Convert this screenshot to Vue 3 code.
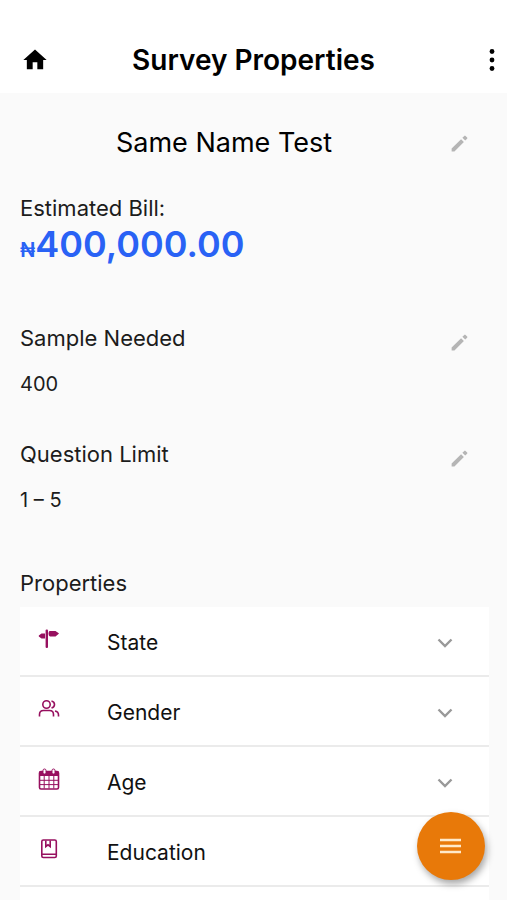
<template>
  <div class="page">
    <header class="app-bar">
      <a href="#" class="icon-btn" aria-label="Home">
        <svg class="icon-home" viewBox="0 0 24 24" fill="currentColor">
          <path d="M10 20v-6h4v6h5v-8h3L12 3 2 12h3v8z" />
        </svg>
      </a>
      <h1 class="title">Survey Properties</h1>
      <button type="button" class="icon-btn more" aria-label="More options">
        <svg class="icon-more" viewBox="0 0 8 24" fill="currentColor">
          <circle cx="4" cy="3.500" r="2.400" />
          <circle cx="4" cy="12" r="2.400" />
          <circle cx="4" cy="20.500" r="2.400" />
        </svg>
      </button>
    </header>

    <main class="content">
      <section class="name-row">
        <h2 class="name">Same Name Test</h2>
        <button type="button" class="icon-btn edit" aria-label="Edit name">
          <svg class="icon-edit" viewBox="0 0 24 24" fill="currentColor"><path :d="pencil" /></svg>
        </button>
      </section>

      <section class="bill">
        <h3 class="label">Estimated Bill:</h3>
        <p class="amount"><span class="currency">₦</span>400,000.00</p>
      </section>

      <section v-for="field in fields" :key="field.label" class="field">
        <div>
          <h3 class="label">{{ field.label }}</h3>
          <p class="value">{{ field.value }}</p>
        </div>
        <button type="button" class="icon-btn edit" :aria-label="'Edit ' + field.label">
          <svg class="icon-edit" viewBox="0 0 24 24" fill="currentColor"><path :d="pencil" /></svg>
        </button>
      </section>

      <section class="properties">
        <h3 class="label">Properties</h3>
        <ul class="list">
          <li v-for="item in properties" :key="item.name">
            <button type="button" class="row">
              <svg v-if="item.icon === 'signs'" class="row-icon" viewBox="0 0 22 22" fill="currentColor">
                <rect x="7.600" y="1.500" width="2.400" height="18.500" rx="1" />
                <path d="M11.500 3h6l3.300 2.200v.6L17.500 8.500H12q-1.500-.5-1.500-2.700T11.500 3zM7 5.500H3.500L.8 7.600v.8L3.500 10.500H7z" />
              </svg>
              <svg v-else-if="item.icon === 'people'" class="row-icon line" viewBox="0 0 22 22">
                <circle cx="8.500" cy="6.500" r="3.700" />
                <path d="M1.500 18.500v-2q0-4 4-4h6q4 0 4 4v2M13.500 3q3 .8 3 3.500t-3 3.500M17 13q3.500.7 3.500 4v1.500" />
              </svg>
              <svg v-else-if="item.icon === 'calendar'" class="row-icon line" viewBox="0 0 22 22">
                <path fill="currentColor" stroke="none" d="M1.500 3.500h19v4.500h-19z" />
                <rect x="1.500" y="3.500" width="19" height="17.500" rx="1.500" />
                <path class="grid" d="M2 12.300h18M2 16.600h18M6.200 8v12.500M11 8v12.500M15.800 8v12.500" />
                <rect class="ring" x="5" y="1" width="3" height="5" rx="1.500" />
                <rect class="ring" x="14" y="1" width="3" height="5" rx="1.500" />
              </svg>
              <svg v-else class="row-icon line" viewBox="0 0 22 22">
                <rect x="3.800" y="2" width="14.500" height="17.500" rx="1.500" />
                <path d="M4 16.300h14M7.800 2.500v6L10 6.800l2.200 1.700v-6" />
              </svg>
              <span class="row-name">{{ item.name }}</span>
              <svg class="chevron" viewBox="0 0 16 16"><path d="M1.500 4.500L8 11l6.500-6.500" /></svg>
            </button>
          </li>
        </ul>
      </section>
    </main>

    <button type="button" class="fab" aria-label="Open menu">
      <svg class="icon-menu" viewBox="0 0 22 16"><path d="M0 2h21M0 8h21M0 14h21" /></svg>
    </button>
  </div>
</template>

<script setup>
const pencil = 'M3 17.800V21h3.200L17 10.200l-3.200-3.200zM20.710 6.500a1 1 0 0 0 0-1.410l-1.800-1.800a1 1 0 0 0-1.410 0l-2.200 2.200 3.200 3.200z'

const fields = [
  { label: 'Sample Needed', value: '400' },
  { label: 'Question Limit', value: '1 – 5' }
]

const properties = [
  { name: 'State', icon: 'signs' },
  { name: 'Gender', icon: 'people' },
  { name: 'Age', icon: 'calendar' },
  { name: 'Education', icon: 'book' }
]
</script>

<style>
body {
  margin: 0;
  background: #fafafa;
}
</style>

<style scoped>
.page {
  display: flex;
  flex-direction: column;
  height: 100vh;
  overflow: hidden;
  font-family: Inter, "Liberation Sans", sans-serif;
  color: #1c1c1c;
}

h1, h2, h3, p, ul {
  margin: 0;
  padding: 0;
}

button {
  padding: 0;
  border: 0;
  background: none;
  font: inherit;
  color: inherit;
  cursor: pointer;
}

svg {
  display: block;
}

.app-bar {
  display: flex;
  flex: none;
  align-items: center;
  height: 66px;
  padding: 27px 4px 0 20px;
  background: #fff;
  color: #000;
}

.icon-btn {
  display: grid;
  place-items: center;
  width: 30px;
  height: 30px;
  color: inherit;
}

.more {
  width: 22px;
}

.icon-home {
  width: 28px;
  height: 28px;
}

.icon-more {
  width: 8px;
  height: 24px;
}

.title {
  flex: 1;
  padding-right: 24px;
  font-size: 28px;
  line-height: 36px;
  font-weight: 600;
  text-align: center;
}

.content {
  display: flex;
  flex: 1;
  flex-direction: column;
  min-height: 0;
  padding: 0 18px 0 20px;
  overflow: hidden;
  background: #fafafa;
}

.name-row {
  display: flex;
  align-items: center;
  height: 100px;
  padding-right: 15px;
}

.name {
  flex: 1;
  padding-right: 16px;
  font-size: 27px;
  line-height: 36px;
  font-weight: 400;
  text-align: center;
  color: #000;
}

.edit {
  color: #b5b5b5;
}

.icon-edit {
  width: 21px;
  height: 21px;
}

.label {
  font-size: 22px;
  line-height: 30px;
  font-weight: 400;
}

.bill {
  padding-bottom: 52px;
}

.amount {
  font-size: 36px;
  line-height: 42px;
  font-weight: 600;
  color: #2962f5;
}

.currency {
  font-size: 20px;
}

.field {
  display: flex;
  align-items: center;
  justify-content: space-between;
  padding: 0 15px 40px 0;
}

.field .edit {
  align-self: flex-start;
  margin-top: 4px;
}

.value {
  padding-top: 16px;
  font-size: 20px;
  line-height: 30px;
}

.properties {
  display: flex;
  flex: 1;
  flex-direction: column;
  padding-top: 13px;
}

.list {
  flex: 1;
  margin-top: 9px;
  list-style: none;
  background: #fff;
}

.row {
  display: flex;
  align-items: center;
  width: 100%;
  height: 70px;
  padding: 3px 36px 0 18px;
  border-bottom: 2px solid #ebebeb;
  text-align: left;
}

.row-icon {
  width: 22px;
  height: 22px;
  margin-bottom: 8px;
  color: #97105f;
}

.line {
  fill: none;
  stroke: currentColor;
  stroke-width: 1.6;
}

.grid {
  stroke-width: 1;
}

.ring {
  fill: #fff;
  stroke-width: 1;
}

.row-name {
  flex: 1;
  padding-left: 47px;
  font-size: 21px;
  line-height: 30px;
  color: #111;
}

.chevron {
  width: 16px;
  height: 16px;
  fill: none;
  stroke: #999;
  stroke-width: 2.4;
}

.fab {
  position: fixed;
  right: 22px;
  bottom: 20px;
  display: grid;
  place-items: center;
  width: 68px;
  height: 68px;
  border-radius: 50%;
  background: #e87909;
  box-shadow: 2px 4px 7px rgba(0, 0, 0, 0.35);
}

.icon-menu {
  width: 22px;
  height: 16px;
  fill: none;
  stroke: #ffe9c9;
  stroke-width: 2.4;
}
</style>
